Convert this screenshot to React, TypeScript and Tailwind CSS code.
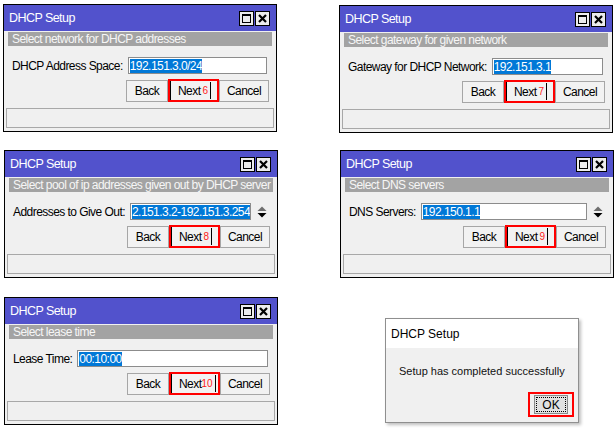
import { FC } from 'react';

const NARROW = "font-['Liberation_Sans',Arial,sans-serif] tracking-[-0.55px]";

interface WinProps {
  band: string;
  label: string;
  value: string;
  step: string;
  spinner?: boolean;
  className?: string;
}

const TitleButtons: FC = () => (
  <div className="ml-auto flex gap-[1px] tracking-normal">
    <div className="w-[15px] h-[15px] border border-black bg-[#ececec] flex items-center justify-center">
      <div className="w-[9px] h-[9px] border border-black border-t-2" />
    </div>
    <div className="w-[15px] h-[15px] border border-black bg-[#ececec] flex items-center justify-center">
      <svg width="9" height="9" viewBox="0 0 9 9">
        <path d="M1 1 L8 8 M8 1 L1 8" stroke="#000" strokeWidth="2.2" />
      </svg>
    </div>
  </div>
);

const Spinner: FC = () => (
  <svg width="10" height="14" viewBox="0 0 10 14" className="ml-[6px] shrink-0">
    <path d="M0.5 6 L5 1.5 L9.5 6 Z" fill="#6f6f6f" />
    <path d="M0.5 8 L5 12.5 L9.5 8 Z" fill="#000" />
  </svg>
);

const Btn: FC<{ children: React.ReactNode; w: string }> = ({ children, w }) => (
  <div className={`${w} h-[22px] border border-[#a6a6a6] bg-[#f2f2f2] flex items-center justify-center text-[12px] text-black`}>
    {children}
  </div>
);

const WinboxDialog: FC<WinProps> = ({ band, label, value, step, spinner, className }) => (
  <div className={`w-[274px] h-[128px] border border-black bg-[#f0f0f0] flex flex-col ${NARROW} ${className ?? ''}`}>
    <div className="h-[26px] bg-[#5252cc] flex items-center pl-[5px] pr-[6px]">
      <span className="text-white text-[12.5px]">DHCP Setup</span>
      <TitleButtons />
    </div>
    <div className="mx-[4px] mt-[1px] h-[14px] bg-[#a3a3a3] text-[#f6f6f6] text-[12px] leading-[14px] px-[4px] whitespace-nowrap overflow-hidden">
      {band}
    </div>
    <div className={`flex items-center mt-[11px] pl-[8px] h-[17px] ${spinner ? 'pr-[10px]' : 'pr-[9px]'}`}>
      <span className="text-[12px] text-black whitespace-nowrap mr-[5px]">{label}</span>
      <div className="flex-1 min-w-0 h-[17px] border border-[#8c8c8c] bg-white flex items-center px-[1px] overflow-hidden">
        <span className="bg-[#0078d7] text-white text-[12px] leading-[14px] h-[14px] whitespace-nowrap">{value}</span>
      </div>
      {spinner && <Spinner />}
    </div>
    <div className="flex justify-end mt-[6px] pr-[7px]">
      <Btn w="w-[42px]">Back</Btn>
      <div className="w-[51px] h-[23px] -mt-[1px] border-2 border-[#ff0000] flex">
        <div className="flex-1 border-l border-black bg-[#f2f2f2] flex items-center pl-[7px] text-[12px] text-black">
          <span>Next</span>
          <span className={`text-[10px] text-[#ff2020] tracking-normal ${step === '10' ? 'ml-0' : 'ml-[2px]'}`}>{step}</span>
          <span className="w-[1px] h-[17px] bg-black ml-[2px]" />
        </div>
      </div>
      <Btn w="w-[50px]">Cancel</Btn>
    </div>
    <div className="mx-[2px] mt-[6px] h-[20px] border border-[#a8a8a8] bg-[#f0f0f0]" />
  </div>
);

const MessageBox: FC = () => (
  <div className="w-[194px] h-[105px] border border-[#8f8f8f] bg-[#f0f0f0] shadow-[2px_2px_3px_rgba(0,0,0,0.25)] flex flex-col font-['Liberation_Sans',Arial,sans-serif]">
    <div className="h-[29px] bg-white flex items-center pl-[5px] text-[12px] text-black">DHCP Setup</div>
    <div className="pl-[13px] mt-[16px] text-[11px] text-[#111] leading-[14px]">Setup has completed successfully</div>
    <div className="flex justify-end pr-[4px] mt-[14px]">
      <div className="w-[46px] h-[25px] border-2 border-[#ff0000] flex items-center justify-center">
        <div className="w-[34px] h-[19px] border border-[#8a8a8a] bg-[#e1e1e1] p-[1px]">
          <div className="w-full h-full border border-dotted border-black flex items-center justify-center text-[12px] text-black">
            OK
          </div>
        </div>
      </div>
    </div>
  </div>
);

export default function App() {
  return (
    <div className="w-[616px] h-[429px] bg-white overflow-hidden">
      <div className="flex pt-[4px] pl-[3px]">
        <WinboxDialog
          band="Select network for DHCP addresses"
          label="DHCP Address Space:"
          value="192.151.3.0/24"
          step="6"
        />
        <WinboxDialog
          className="ml-[62px] mt-[1px]"
          band="Select gateway for given network"
          label="Gateway for DHCP Network:"
          value="192.151.3.1"
          step="7"
        />
      </div>
      <div className="flex mt-[17px] pl-[4px]">
        <WinboxDialog
          band="Select pool of ip addresses given out by DHCP server"
          label="Addresses to Give Out:"
          value="2.151.3.2-192.151.3.254"
          step="8"
          spinner
        />
        <WinboxDialog
          className="ml-[62px]"
          band="Select DNS servers"
          label="DNS Servers:"
          value="192.150.1.1"
          step="9"
          spinner
        />
      </div>
      <div className="flex mt-[19px] pl-[4px]">
        <WinboxDialog
          band="Select lease time"
          label="Lease Time:"
          value="00:10:00"
          step="10"
        />
        <div className="ml-[107px] mt-[21px]">
          <MessageBox />
        </div>
      </div>
    </div>
  );
}
